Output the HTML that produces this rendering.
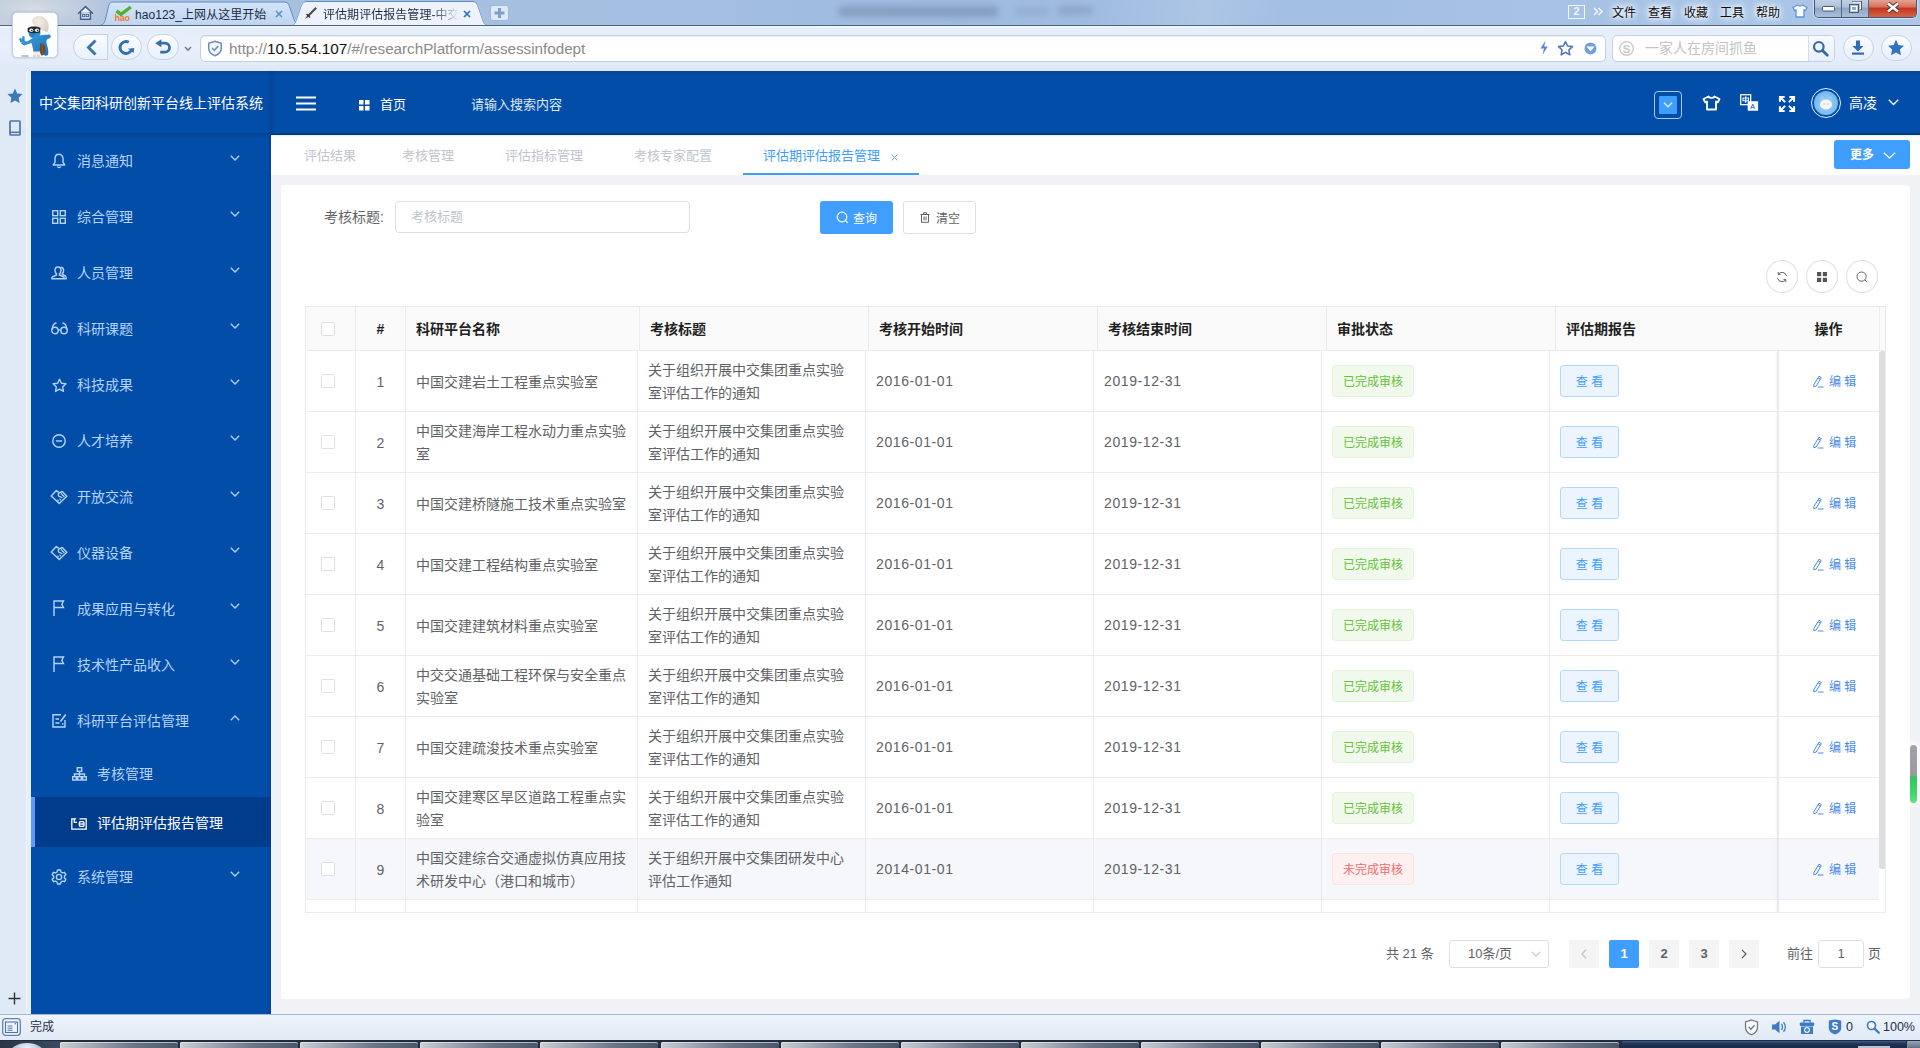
<!DOCTYPE html>
<html lang="zh-CN">
<head>
<meta charset="utf-8">
<title>评估期评估报告管理-中交集团科研创新平台线上评估系统</title>
<style>
*{box-sizing:border-box;margin:0;padding:0}
html,body{width:1920px;height:1048px;overflow:hidden;background:#f0f2f5}
body{position:relative;font-family:"Liberation Sans","Noto Sans CJK SC",sans-serif;font-size:14px;color:#606266}
.abs,.abs-all>*{position:absolute}
svg{display:block;overflow:visible}
i{font-style:normal}
/* ---------- browser chrome ---------- */
#titlebar{left:0;top:0;width:1920px;height:26px;background:linear-gradient(90deg,#c3cfdf 0%,#b4c6de 5%,#a8c1e0 12%,#a4bfe0 30%,#9ebbe0 50%,#a3bfe3 70%,#abc6e8 100%);overflow:hidden}
#toolbar{left:0;top:25px;width:1920px;height:46px;background:linear-gradient(180deg,#e4edf9 0%,#e9f0fb 45%,#e3ecf9 80%,#dde7f5 100%);border-top:1px solid #4f6180}
#leftbar{left:0;top:71px;width:31px;height:943px;background:#e0e9f6}
#leftbar .st{position:absolute;right:0;top:0;width:5px;height:100%;background:#e6eefa;border-left:1px solid #edf3fb}
#status{left:0;top:1014px;width:1920px;height:26px;background:linear-gradient(180deg,#eff4fb,#e0e9f5);border-top:1px solid #a4b9d4;font-size:12px;color:#1f3a5f}
#taskbar{left:0;top:1040px;width:1920px;height:8px;background:#3d4c63;overflow:hidden}
.t12{font-size:12px;line-height:14px;white-space:nowrap}
/* ---------- app ---------- */
#side{left:31px;top:71px;width:240px;height:943px;background:#024da7;overflow:hidden}
#head{left:271px;top:71px;width:1649px;height:64px;background:#024da7;color:#fff}
#tabs{left:271px;top:135px;width:1649px;height:40px;background:#fff;font-size:13px;color:#c0c4cc}
#card{left:281px;top:185px;width:1629px;height:814px;background:#fff;border-radius:4px}
.mi{position:absolute;left:0;width:240px;height:56px;color:#b5d3fb;font-size:14px;line-height:56px;white-space:nowrap}
.mi svg{position:absolute}
.mi .tx{position:absolute;left:46px;top:0}
.mi.sub{height:50px;line-height:50px}
.mi.sub .tx{left:66px}
.mi .ar{left:199px;top:21.500px}
</style>
</head>
<body>
<!-- ================= browser chrome ================= -->
<div id="titlebar" class="abs">
  <div class="abs" style="left:-20px;top:-12px;width:120px;height:40px;background:radial-gradient(ellipse at 45% 50%,rgba(214,220,226,.95) 0%,rgba(196,208,222,.7) 45%,rgba(170,192,221,0) 75%)"></div>
  <div class="abs" style="left:838px;top:6px;width:160px;height:11px;background:#5f7591;opacity:.4;filter:blur(3px);border-radius:4px"></div>
  <div class="abs" style="left:1016px;top:7px;width:32px;height:8px;background:#6f86a6;opacity:.25;filter:blur(3px)"></div>
  <div class="abs" style="left:1058px;top:6px;width:34px;height:9px;background:#5f7591;opacity:.3;filter:blur(3px)"></div>
  <div class="abs" style="left:1100px;top:0;width:260px;height:26px;background:linear-gradient(100deg,rgba(255,255,255,0) 0%,rgba(255,255,255,.13) 40%,rgba(255,255,255,0) 70%)"></div>
</div>
<!-- home icon -->
<svg class="abs" style="left:77px;top:5px" width="17" height="16" viewBox="0 0 17 16"><path d="M1.5 8.2 L8.5 1.6 L15.5 8.2 M3.6 7 V14.3 H13.4 V7" fill="#f4f8fd" stroke="#3c5f95" stroke-width="1.5" stroke-linejoin="round" stroke-linecap="round"/><rect x="5.6" y="9.3" width="2.2" height="2.4" fill="none" stroke="#3c5f95" stroke-width="1"/><rect x="9.2" y="9.3" width="2.2" height="2.4" fill="none" stroke="#3c5f95" stroke-width="1"/></svg>
<!-- tabs -->
<svg class="abs" style="left:98px;top:0" width="420" height="27" viewBox="0 0 420 27"><defs><linearGradient id="tabg" x1="0" y1="0" x2="0" y2="1"><stop offset="0" stop-color="#d4e4f8"/><stop offset="1" stop-color="#bfd5f1"/></linearGradient></defs>
  <path d="M1.500 25.500 C5.500 25 6.500 22.500 7.500 19 L10.500 6.500 C11.300 3.200 12.500 2 15.500 2 H186 C189 2 190.5 3.2 191.5 6.5 L195.5 18 C197 22 198 25 202.5 25.5 Z" fill="url(#tabg)" stroke="#5f8bc9" stroke-width="1"/>
  <path d="M0 26 H192.5 C197 25.5 198 22 199.5 18 L203.500 6.5 C204.5 3.2 206 1.500 209 1.500 H374 C377 1.500 378.5 3.2 379.5 6.500 L383.500 18 C385 22 386 25.500 390.500 26 H420" fill="none" stroke="#5f8bc9" stroke-width="1"/>
  <path d="M192.500 26.500 C197 25.500 198 22 199.500 18 L203.500 6.500 C204.500 3.200 206 2 209 2 H374 C377 2 378.500 3.200 379.500 6.500 L383.500 18 C385 22 386 25.500 390.500 26.500 Z" fill="#eef3fb"/>
  <rect x="392.500" y="5.500" width="18" height="15" rx="2.500" fill="#dfe9f6" stroke="#9fb8da"/>
  <path d="M401.500 8 V18 M396.500 13 H406.500" stroke="#7f9fcb" stroke-width="3"/>
</svg>
<!-- hao icon -->
<svg class="abs" style="left:114px;top:4px" width="19" height="18" viewBox="0 0 19 18"><path d="M2.500 6.800 L7 10.300 L16.800 3" fill="none" stroke="#55b02e" stroke-width="3.400"/><text x="0.500" y="16.500" font-family="Liberation Sans,sans-serif" font-size="9" font-weight="bold" fill="#ef7a28" letter-spacing="-0.300">hao</text></svg>
<div class="abs t12" style="left:135px;top:8px;color:#1a2a44;font-size:12px;letter-spacing:.05px">hao123_上网从这里开始</div>
<svg class="abs" style="left:275px;top:10px" width="8" height="8" viewBox="0 0 8 8"><path d="M1 1 L7 7 M7 1 L1 7" stroke="#5a8fd0" stroke-width="1.600"/></svg>
<!-- active tab -->
<svg class="abs" style="left:304px;top:6px" width="14" height="14" viewBox="0 0 14 14"><path d="M1 13 L3.500 9 L11.500 1 L13 2.500 L5 10.500 Z" fill="#4d4d4d"/><path d="M2.500 8 L6 11.500" stroke="#333" stroke-width="1.400"/></svg>
<div class="abs t12" style="left:323px;top:8px;color:#1a2a44;font-size:12px;letter-spacing:.05px;width:136px;overflow:hidden;-webkit-mask-image:linear-gradient(90deg,#000 80%,transparent 100%);mask-image:linear-gradient(90deg,#000 80%,transparent 100%)">评估期评估报告管理-中交集团科研创新平台线上评估系统</div>
<svg class="abs" style="left:463px;top:10px" width="8" height="8" viewBox="0 0 8 8"><path d="M1 1 L7 7 M7 1 L1 7" stroke="#2f6fc0" stroke-width="1.700"/></svg>
<!-- right title menu -->
<div class="abs" style="left:1568px;top:5px;width:17px;height:14px;border:1.500px solid #f2f7fd;color:#f2f7fd;font-size:11px;font-weight:bold;line-height:11px;text-align:center">2</div>
<svg class="abs" style="left:1593px;top:7px" width="10" height="9" viewBox="0 0 10 9"><path d="M1 1 L4.500 4.500 L1 8 M5.500 1 L9 4.500 L5.500 8" fill="none" stroke="#f2f7fd" stroke-width="1.600"/></svg>
<div class="abs t12 tm" style="left:1612px;top:4px">文件</div>
<div class="abs t12 tm" style="left:1648px;top:4px">查看</div>
<div class="abs t12 tm" style="left:1684px;top:4px">收藏</div>
<div class="abs t12 tm" style="left:1720px;top:4px">工具</div>
<div class="abs t12 tm" style="left:1756px;top:4px">帮助</div>
<svg class="abs" style="left:1792px;top:4px" width="16" height="14" viewBox="0 0 16 14"><path d="M5.500 1 C6.500 2.500 9.500 2.500 10.500 1 L15 3.500 L13.500 6.500 L12 5.800 V13 H4 V5.800 L2.500 6.500 L1 3.500 Z" fill="#f8fbff" stroke="#5f92d8" stroke-width="1.300" stroke-linejoin="round"/></svg>
<!-- window buttons -->
<div class="abs" style="left:1814px;top:-1px;width:103px;height:19px;border:1px solid #46566e;border-top:none;border-radius:0 0 5px 5px;overflow:hidden;box-shadow:0 0 0 1px rgba(255,255,255,.45)">
  <div class="abs" style="left:0;top:0;width:27px;height:18px;background:linear-gradient(180deg,#c3d3e8 0%,#aebfd8 45%,#8ea5c6 50%,#a9c0dd 100%);border-right:1px solid #56677f"></div>
  <div class="abs" style="left:27px;top:0;width:27px;height:18px;background:linear-gradient(180deg,#c3d3e8 0%,#aebfd8 45%,#8ea5c6 50%,#a9c0dd 100%);border-right:1px solid #56677f"></div>
  <div class="abs" style="left:54px;top:0;width:48px;height:18px;background:linear-gradient(180deg,#e7a99c 0%,#d6705c 45%,#c3351b 50%,#d4644a 100%)"></div>
  <svg class="abs" style="left:7px;top:7px" width="13" height="6" viewBox="0 0 13 6"><rect x=".5" y=".5" width="12" height="4.500" rx="1" fill="#fff" stroke="#4c5a70"/></svg>
  <svg class="abs" style="left:34px;top:2px" width="13" height="12" viewBox="0 0 13 12"><rect x="3.500" y=".5" width="9" height="8" fill="none" stroke="#4c5a70" stroke-width="1"/><rect x="3.500" y=".5" width="9" height="8" fill="none" stroke="#fff" stroke-width="1" transform="translate(0.700,0.700) scale(.86)"/><rect x=".5" y="3.500" width="9" height="8" fill="#b4c5dc" stroke="#4c5a70"/><rect x="2.500" y="5.500" width="5" height="4" fill="#93a9c8" stroke="#fff"/></svg>
  <svg class="abs" style="left:71px;top:3px" width="14" height="11" viewBox="0 0 14 11"><path d="M2 1.500 L12 9.500 M12 1.500 L2 9.500" stroke="#4b3030" stroke-width="4.200"/><path d="M2 1.500 L12 9.500 M12 1.500 L2 9.500" stroke="#fff" stroke-width="2.600"/></svg>
</div>
<style>.tm{margin-top:1.500px;color:#0b0b0b;text-shadow:0 0 4px #fff,0 0 6px #eef4fc,0 0 9px #eef4fc,0 0 12px #e8f0fa}</style>

<div id="toolbar" class="abs"></div>
<div class="abs" style="left:0;top:26px;width:1920px;height:3px;background:linear-gradient(180deg,#f4f8fd,#e4edf9)"></div>
<!-- avatar -->
<div class="abs" style="left:12px;top:12px;width:46px;height:46px;border-radius:5px;background:#fdfdfe;border:1px solid #c8d4e4;box-shadow:0 0 2px rgba(60,80,110,.35);overflow:hidden">
  <svg width="44" height="44" viewBox="0 0 44 44">
    <defs><radialGradient id="hatg" cx="40%" cy="35%" r="70%"><stop offset="0" stop-color="#f4efe6"/><stop offset="1" stop-color="#d8d0c2"/></radialGradient>
    <linearGradient id="bodg" x1="0" y1="0" x2="1" y2="1"><stop offset="0" stop-color="#3aa0dc"/><stop offset="1" stop-color="#1d6fb3"/></linearGradient></defs>
    <path d="M19 8 C20 2.500 29 1 33 6 C36 9.500 36.500 15 34.500 19 C32 18 28 17.500 24.500 14.500 C22 13 19.500 11.500 19 8 Z" fill="url(#hatg)"/>
    <ellipse cx="21.500" cy="20" rx="6" ry="5.500" fill="#2f92d4"/>
    <path d="M14.500 15.500 C17 13 23 13 27.500 15 L27 19.500 C23 20.500 18 20.500 14.800 19 Z" fill="#20262e"/>
    <ellipse cx="18.300" cy="17.300" rx="2" ry="1.700" fill="#eef1f4"/><ellipse cx="24" cy="17.300" rx="2.100" ry="1.800" fill="#eef1f4"/>
    <circle cx="18.800" cy="17.500" r=".8" fill="#222"/><circle cx="24.600" cy="17.500" r=".8" fill="#222"/>
    <ellipse cx="19.500" cy="21.500" rx="2.300" ry="1.700" fill="#1f7fc6"/>
    <path d="M20 25 C24 22 31 22 36.500 21.500 C38.500 22.500 38 25 36 25.500 C34 26 33 27 33.500 30 C34.500 34 36 38 35 42 L32 43 C31 41 30 40 28 40 L20.500 39 C20 35 19 32 18.500 30 L11 32.500 L8 30.500 L10 27.500 L14 28.500 Z" fill="url(#bodg)"/>
    <path d="M7.500 29.500 L6 26 L8 24.500 L9 27 L9.500 23 L11.500 23.300 L11.800 28.500 Z" fill="#2f92d4"/>
    <path d="M27.500 30.500 C30.500 30 32.500 33 32.300 37 C32 41 30 43 28.500 42.500 C26.500 41 26.500 33 27.500 30.500 Z" fill="#8b3a24"/>
    <path d="M29 31 L30 42" stroke="#3c7a4a" stroke-width="1"/>
    <path d="M20.500 38.500 H27 V42 H20.500 Z" fill="#efece6"/>
    <path d="M20 42 H23.300 V44 H19.500 Z M24 42 H27 L27.500 44 H24 Z" fill="#e3d6c4"/>
    <path d="M8.500 43 H15.500" stroke="#4a5d7a" stroke-width=".9" opacity=".8"/>
  </svg>
</div>
<!-- nav buttons -->
<div class="abs" style="left:73px;top:34px;width:35px;height:26px;border:1px solid #c5d0e0;border-radius:13px 0 0 13px;background:linear-gradient(180deg,#fafcff,#e9f0fa)"></div>
<svg class="abs" style="left:85.500px;top:39px" width="12" height="17" viewBox="0 0 12 17"><path d="M9.500 1.500 L2.500 8.500 L9.500 15.500" fill="none" stroke="#3c72b0" stroke-width="2.900" stroke-linejoin="miter"/></svg>
<div class="abs" style="left:111px;top:34px;width:31px;height:26px;border:1px solid #c5d3e6;border-radius:13px;background:linear-gradient(180deg,#fafcff,#e9f0fa)"></div>
<svg class="abs" style="left:117px;top:39px" width="18" height="17" viewBox="0 0 18 17"><path d="M11.800 3.200 A6 6 0 1 0 14.400 11.200" fill="none" stroke="#356fab" stroke-width="2.900"/><path d="M11 9.700 L17.200 8.900 L16.700 14 Z" fill="#356fab"/></svg>
<div class="abs" style="left:147px;top:34px;width:32px;height:26px;border:1px solid #c5d3e6;border-radius:13px;background:linear-gradient(180deg,#fafcff,#e9f0fa)"></div>
<svg class="abs" style="left:154px;top:39px" width="18" height="17" viewBox="0 0 18 17"><path d="M6.500 4.200 H11 A4.500 4.500 0 0 1 11 13.200 H6.200" fill="none" stroke="#356fab" stroke-width="2.800"/><path d="M1.200 4.200 L7.400 .2 V8.200 Z" fill="#356fab"/></svg>
<svg class="abs" style="left:184px;top:45.500px" width="8" height="6" viewBox="0 0 8 6"><path d="M1 1 L4 4.200 L7 1" fill="none" stroke="#5f7396" stroke-width="1.300"/></svg>
<!-- address bar -->
<div class="abs" style="left:200px;top:35px;width:1406px;height:27px;border:1px solid #c3d1e5;border-radius:5px;background:#fff;box-shadow:inset 0 1px 1px rgba(160,180,210,.25)"></div>
<svg class="abs" style="left:207px;top:40px" width="16" height="17" viewBox="0 0 16 17"><path d="M8 1.200 L14.300 3.200 V8 C14.300 11.800 11.500 14.500 8 15.800 C4.500 14.500 1.700 11.800 1.700 8 V3.200 Z" fill="#f4f7fb" stroke="#6c8db8" stroke-width="1.500"/><path d="M5 8 L7.300 10.300 L11.300 6" fill="none" stroke="#6c8db8" stroke-width="1.500"/></svg>
<div class="abs" style="left:229px;top:40px;font-size:15.300px;line-height:18px;color:#8a8a8a;white-space:nowrap;letter-spacing:-.05px">http://<span style="color:#111">10.5.54.107</span>/#/researchPlatform/assessinfodept</div>
<svg class="abs" style="left:1539px;top:40px" width="10" height="16" viewBox="0 0 10 16"><path d="M6.500 .5 L1.500 8.500 H5 L3.500 15 L8.800 6.500 H5.200 Z" fill="#5d87c0"/></svg>
<svg class="abs" style="left:1557px;top:40px" width="17" height="16" viewBox="0 0 17 16"><path d="M8.500 1.500 L10.600 6 L15.500 6.600 L11.900 10 L12.800 14.800 L8.500 12.400 L4.200 14.800 L5.100 10 L1.500 6.600 L6.400 6 Z" fill="none" stroke="#4d7bb8" stroke-width="1.600" stroke-linejoin="round"/></svg>
<svg class="abs" style="left:1584px;top:42px" width="13" height="13" viewBox="0 0 13 13"><circle cx="6.500" cy="6.500" r="6" fill="#6ea0dd"/><path d="M2.500 4.500 H10.500 L6.500 9.500 Z" fill="#fff"/></svg>
<!-- search box -->
<div class="abs" style="left:1612px;top:35px;width:223px;height:27px;border:1px solid #c3d1e5;border-radius:5px;background:#fff"></div>
<div class="abs" style="left:1808px;top:36px;width:26px;height:25px;border-left:1px solid #d3deee;background:linear-gradient(180deg,#f8fbff,#e8eff9);border-radius:0 4px 4px 0"></div>
<svg class="abs" style="left:1619px;top:41px" width="15" height="15" viewBox="0 0 15 15"><circle cx="7.500" cy="7.500" r="6.800" fill="none" stroke="#c9c9c9" stroke-width="1.300"/><text x="3.800" y="11.700" font-family="Liberation Sans,sans-serif" font-weight="bold" font-size="11.500" fill="#c9c9c9">S</text></svg>
<div class="abs" style="left:1645px;top:40px;font-size:14px;line-height:17px;color:#c4c4c4;white-space:nowrap">一家人在房间抓鱼</div>
<svg class="abs" style="left:1812px;top:40px" width="17" height="17" viewBox="0 0 17 17"><circle cx="6.800" cy="6.800" r="4.800" fill="none" stroke="#3568a8" stroke-width="2.200"/><path d="M10.500 10.500 L15.300 15.300" stroke="#3568a8" stroke-width="2.800" stroke-linecap="round"/></svg>
<div class="abs" style="left:1843px;top:35px;width:31px;height:26px;border:1px solid #c5d3e6;border-radius:13px;background:linear-gradient(180deg,#fafcff,#e9f0fa)"></div>
<svg class="abs" style="left:1851px;top:40px" width="14" height="15" viewBox="0 0 14 15"><path d="M5 .5 H9 V6 H12.500 L7 11.500 L1.500 6 H5 Z" fill="#2f6cb3"/><rect x="1" y="12.500" width="12" height="2.200" fill="#2f6cb3"/></svg>
<div class="abs" style="left:1881px;top:35px;width:31px;height:26px;border:1px solid #c5d3e6;border-radius:13px;background:linear-gradient(180deg,#fafcff,#e9f0fa)"></div>
<svg class="abs" style="left:1887px;top:39px" width="18" height="17" viewBox="0 0 18 17"><path d="M9 .8 L11.400 6 L17 6.700 L12.900 10.600 L13.900 16.200 L9 13.500 L4.100 16.200 L5.100 10.600 L1 6.700 L6.600 6 Z" fill="#2f74c0"/></svg>

<!-- left vertical bar -->
<div id="leftbar" class="abs"><div class="st"></div>
  <svg class="abs" style="left:7px;top:17px" width="16" height="16" viewBox="0 0 16 16"><path d="M8 .5 L10.200 5.400 L15.500 6 L11.600 9.700 L12.600 15 L8 12.400 L3.400 15 L4.400 9.700 L.5 6 L5.800 5.400 Z" fill="#3d77b8"/></svg>
  <svg class="abs" style="left:9px;top:49px" width="12" height="16" viewBox="0 0 12 16"><rect x="1" y="1" width="10" height="14" rx=".8" fill="none" stroke="#4a76ac" stroke-width="1.700"/><path d="M1 12.300 H11" stroke="#4a76ac" stroke-width="1.500"/></svg>
  <svg class="abs" style="left:8px;top:921px" width="13" height="13" viewBox="0 0 13 13"><path d="M6.500 .5 V12.500 M.5 6.500 H12.500" stroke="#333" stroke-width="1.400"/></svg>
</div>

<!-- status bar -->
<div id="status" class="abs">
  <svg class="abs" style="left:2px;top:3px" width="19" height="18" viewBox="0 0 19 18"><rect x=".7" y=".7" width="17.600" height="16.600" rx="3" fill="#f1f6fc" stroke="#5d82b4" stroke-width="1.300"/><rect x="3.500" y="4" width="12" height="10.500" fill="none" stroke="#4a73aa" stroke-width="1.100"/><path d="M5.500 8 H10.500 M5.500 10.200 H10.500 M5.500 12.300 H10.500" stroke="#4a73aa" stroke-width="1"/><circle cx="13.300" cy="5.800" r=".8" fill="#4a73aa"/></svg>
  <div class="abs t12" style="left:30px;top:5px;color:#1b2f4d">完成</div>
  <svg class="abs" style="left:1744px;top:4px" width="15" height="17" viewBox="0 0 15 17"><path d="M7.500 1 L13.500 3 V8 C13.500 11.800 10.800 14.500 7.500 15.800 C4.200 14.500 1.500 11.800 1.500 8 V3 Z" fill="#f6f8fb" stroke="#6b7480" stroke-width="1.200"/><path d="M4.700 8 L6.900 10.200 L10.500 6.300" fill="none" stroke="#6b7480" stroke-width="1.300"/></svg>
  <svg class="abs" style="left:1771px;top:5px" width="16" height="14" viewBox="0 0 16 14"><path d="M1 4.500 H4 L8.500 .8 V13.200 L4 9.500 H1 Z" fill="#3d7cc4"/><path d="M10.500 4 C11.800 5.500 11.800 8.500 10.500 10 M12.500 2.200 C15 4.800 15 9.200 12.500 11.800" fill="none" stroke="#3d7cc4" stroke-width="1.300"/></svg>
  <svg class="abs" style="left:1799px;top:4px" width="16" height="16" viewBox="0 0 16 16"><path d="M5 3.500 V1.500 H11 V3.500" fill="none" stroke="#3d7cc4" stroke-width="1.500"/><rect x=".8" y="3.500" width="14.400" height="3.500" rx="1" fill="#3d7cc4"/><path d="M2 7.500 H14 V15 H2 Z" fill="#3d7cc4"/><circle cx="8" cy="11" r="3" fill="#e9f0f9"/><path d="M8 9 V13 M6 11 H10" stroke="#3d7cc4" stroke-width="1.300"/></svg>
  <svg class="abs" style="left:1828px;top:4px" width="14" height="16" viewBox="0 0 14 16"><path d="M.8 1.500 L7 .5 L13.200 1.500 V9 C13.200 12.500 10 14.500 7 15.500 C4 14.500 .8 12.500 .8 9 Z" fill="#3d7cc4"/><text x="3.600" y="11.300" font-family="Liberation Sans,sans-serif" font-size="10" font-weight="bold" fill="#fff">S</text></svg>
  <div class="abs t12" style="left:1846px;top:5px;color:#1b2f4d;font-size:12.500px">0</div>
  <svg class="abs" style="left:1866px;top:5px" width="14" height="14" viewBox="0 0 14 14"><circle cx="5.500" cy="5.500" r="4" fill="#f4f8fc" stroke="#3d7cc4" stroke-width="1.700"/><path d="M8.600 8.600 L12.800 12.800" stroke="#3d7cc4" stroke-width="2.300" stroke-linecap="round"/></svg>
  <div class="abs t12" style="left:1883px;top:5px;color:#1b2f4d;font-size:12.500px">100%</div>
</div>
<!-- taskbar sliver -->
<style>.tk{top:2px;width:118px;height:6px;border-radius:2px 2px 0 0;background:linear-gradient(90deg,#c9cdd3 0%,#a4abb6 25%,#6d788a 60%,#4a566a 100%);box-shadow:inset 0 1px 0 rgba(255,255,255,.55),inset 1px 0 0 rgba(255,255,255,.4)}</style>
<div id="taskbar" class="abs">
  <div class="abs" style="left:0;top:0;width:1920px;height:8px;background:#232c3a"></div>
  <div class="abs" style="left:0;top:1px;width:60px;height:7px;background:linear-gradient(90deg,#2a3445,#3b4a61)"></div>
  <div class="abs" style="left:10px;top:3px;width:34px;height:20px;border-radius:50%;background:radial-gradient(ellipse at 50% 30%,#f3f6fa 0%,#b9c7da 50%,#5d7392 100%)"></div>
  <div class="abs tk" style="left:60.0px"></div>
  <div class="abs tk" style="left:180.1px"></div>
  <div class="abs tk" style="left:300.2px"></div>
  <div class="abs tk" style="left:420.3px"></div>
  <div class="abs tk" style="left:540.4px"></div>
  <div class="abs tk" style="left:660.5px"></div>
  <div class="abs tk" style="left:780.6px"></div>
  <div class="abs tk" style="left:900.7px"></div>
  <div class="abs tk" style="left:1020.8px"></div>
  <div class="abs tk" style="left:1140.9px"></div>
  <div class="abs tk" style="left:1261.0px"></div>
  <div class="abs tk" style="left:1381.1px"></div>
  <div class="abs tk" style="left:1501.2px"></div>
  <div class="abs" style="left:1622px;top:1px;width:284px;height:7px;background:linear-gradient(180deg,#3a5a8c 0%,#1d3458 40%,#162b4b 100%)"></div>
  <div class="abs" style="left:1907px;top:1px;width:13px;height:7px;background:linear-gradient(180deg,#9aa7b8,#5f6d82);border-left:1px solid #8794a6"></div>
  <div class="abs" style="left:1858px;top:6px;width:32px;height:2px;background:#dfe6ef;opacity:.8"></div>
</div>
<!-- ================= sidebar ================= -->
<div id="side" class="abs">
  <div class="abs" style="left:8px;top:22px;width:230px;line-height:20px;font-size:14px;color:#fff;white-space:nowrap;letter-spacing:0">中交集团科研创新平台线上评估系统</div>
  <div class="abs" style="left:0;top:62px;width:240px;height:6px;background:linear-gradient(180deg,rgba(0,30,80,.22),rgba(0,30,80,0))"></div>
  <div class="abs" style="right:0;top:0;width:4px;height:943px;background:linear-gradient(90deg,rgba(0,30,90,0),rgba(0,30,90,.18))"></div>

  <div class="mi" style="top:62px">
    <svg style="left:21px;top:20px" width="14" height="16" viewBox="0 0 14 16" fill="none" stroke="#b5d3fb" stroke-width="1.400" stroke-linejoin="round"><path d="M7 1.300 C4.200 1.300 3 3.600 3 6 V9.300 L1.200 12 H12.800 L11 9.300 V6 C11 3.600 9.800 1.300 7 1.300 Z"/><path d="M5.300 13.600 C5.800 14.900 8.200 14.900 8.700 13.600"/></svg>
    <span class="tx">消息通知</span>
    <svg class="ar" width="10" height="6" viewBox="0 0 10 6"><path d="M.8 .8 L5 5 L9.200 .8" fill="none" stroke="#b5d3fb" stroke-width="1.300"/></svg>
  </div>
  <div class="mi" style="top:118px">
    <svg style="left:21px;top:21px" width="14" height="14" viewBox="0 0 14 14" fill="none" stroke="#b5d3fb" stroke-width="1.400"><rect x=".7" y=".7" width="5" height="5"/><rect x="8.300" y=".7" width="5" height="5"/><rect x=".7" y="8.300" width="5" height="5"/><rect x="8.300" y="8.300" width="5" height="5"/></svg>
    <span class="tx">综合管理</span>
    <svg class="ar" width="10" height="6" viewBox="0 0 10 6"><path d="M.8 .8 L5 5 L9.200 .8" fill="none" stroke="#b5d3fb" stroke-width="1.300"/></svg>
  </div>
  <div class="mi" style="top:174px">
    <svg style="left:20px;top:21px" width="16" height="14" viewBox="0 0 16 14" fill="none" stroke="#b5d3fb" stroke-width="1.400" stroke-linejoin="round"><path d="M7 1 C4.800 1 4 2.600 4 4.300 C4 6 4.600 7.200 5.500 7.800 V9 L1.500 10.800 C.9 11.100 .8 11.800 .8 12.800 H13.200 C13.200 11.800 13.100 11.100 12.500 10.800 L8.500 9 V7.800 C9.400 7.200 10 6 10 4.300 C10 2.600 9.200 1 7 1 Z"/><path d="M10 1.300 C11.800 1.500 12.600 2.800 12.600 4.500 C12.600 6 12 7 11.300 7.600 V8.500 L14.500 10 C15 10.300 15.200 11 15.200 12.800 H13.400"/></svg>
    <span class="tx">人员管理</span>
    <svg class="ar" width="10" height="6" viewBox="0 0 10 6"><path d="M.8 .8 L5 5 L9.200 .8" fill="none" stroke="#b5d3fb" stroke-width="1.300"/></svg>
  </div>
  <div class="mi" style="top:230px">
    <svg style="left:20px;top:21px" width="17" height="13" viewBox="0 0 17 13" fill="none" stroke="#b5d3fb" stroke-width="1.400"><circle cx="4" cy="8.500" r="3.200"/><circle cx="13" cy="8.500" r="3.200"/><path d="M7.200 8.500 C7.800 7.600 9.200 7.600 9.800 8.500"/><path d="M1 7.500 C1.500 3.500 3 1.200 5.500 1 M16 7.500 C15.500 3.500 14 1.200 11.500 1"/></svg>
    <span class="tx">科研课题</span>
    <svg class="ar" width="10" height="6" viewBox="0 0 10 6"><path d="M.8 .8 L5 5 L9.200 .8" fill="none" stroke="#b5d3fb" stroke-width="1.300"/></svg>
  </div>
  <div class="mi" style="top:286px">
    <svg style="left:21px;top:21px" width="15" height="15" viewBox="0 0 15 15" fill="none" stroke="#b5d3fb" stroke-width="1.400" stroke-linejoin="round"><path d="M7.500 1.200 L9.400 5.300 L13.900 5.800 L10.600 8.900 L11.500 13.400 L7.500 11.200 L3.500 13.400 L4.400 8.900 L1.100 5.800 L5.600 5.300 Z"/></svg>
    <span class="tx">科技成果</span>
    <svg class="ar" width="10" height="6" viewBox="0 0 10 6"><path d="M.8 .8 L5 5 L9.200 .8" fill="none" stroke="#b5d3fb" stroke-width="1.300"/></svg>
  </div>
  <div class="mi" style="top:342px">
    <svg style="left:21px;top:21px" width="14" height="14" viewBox="0 0 14 14" fill="none" stroke="#b5d3fb" stroke-width="1.400"><circle cx="7" cy="7" r="6.200"/><path d="M3.800 7 H10.200"/></svg>
    <span class="tx">人才培养</span>
    <svg class="ar" width="10" height="6" viewBox="0 0 10 6"><path d="M.8 .8 L5 5 L9.200 .8" fill="none" stroke="#b5d3fb" stroke-width="1.300"/></svg>
  </div>
  <div class="mi" style="top:398px">
    <svg style="left:19px;top:20px" width="18" height="16" viewBox="0 0 18 16" fill="none" stroke="#b5d3fb" stroke-width="1.400" stroke-linejoin="round" stroke-linecap="round"><path d="M1.200 7 L6.300 1.600 L9.300 3.800 L12.300 2.400 L16.800 7.200 L9.300 14.600 Z"/><path d="M9.300 3.800 C7.800 5.200 8 6.600 9.200 7.400 C10.300 8 11.200 7.600 12 8.600" stroke-width="1.300"/><path d="M11.300 4.800 L14 7.500" stroke-width="1.300"/><path d="M7.800 11.300 L8.200 11.700 M10 10.300 L10.400 10.700" stroke-width="1.300"/></svg>
    <span class="tx">开放交流</span>
    <svg class="ar" width="10" height="6" viewBox="0 0 10 6"><path d="M.8 .8 L5 5 L9.200 .8" fill="none" stroke="#b5d3fb" stroke-width="1.300"/></svg>
  </div>
  <div class="mi" style="top:454px">
    <svg style="left:19px;top:20px" width="18" height="16" viewBox="0 0 18 16" fill="none" stroke="#b5d3fb" stroke-width="1.400" stroke-linejoin="round" stroke-linecap="round"><path d="M1.200 7 L6.300 1.600 L9.300 3.800 L12.300 2.400 L16.800 7.200 L9.300 14.600 Z"/><path d="M9.300 3.800 C7.800 5.200 8 6.600 9.200 7.400 C10.300 8 11.200 7.600 12 8.600" stroke-width="1.300"/><path d="M11.300 4.800 L14 7.500" stroke-width="1.300"/><path d="M7.800 11.300 L8.200 11.700 M10 10.300 L10.400 10.700" stroke-width="1.300"/></svg>
    <span class="tx">仪器设备</span>
    <svg class="ar" width="10" height="6" viewBox="0 0 10 6"><path d="M.8 .8 L5 5 L9.200 .8" fill="none" stroke="#b5d3fb" stroke-width="1.300"/></svg>
  </div>
  <div class="mi" style="top:510px">
    <svg style="left:22px;top:19px" width="12" height="17" viewBox="0 0 12 17" fill="none" stroke="#b5d3fb" stroke-width="1.400"><path d="M1 16 V1 H10.500 L8.800 4.200 L10.500 7.500 H1"/></svg>
    <span class="tx">成果应用与转化</span>
    <svg class="ar" width="10" height="6" viewBox="0 0 10 6"><path d="M.8 .8 L5 5 L9.200 .8" fill="none" stroke="#b5d3fb" stroke-width="1.300"/></svg>
  </div>
  <div class="mi" style="top:566px">
    <svg style="left:22px;top:19px" width="12" height="17" viewBox="0 0 12 17" fill="none" stroke="#b5d3fb" stroke-width="1.400"><path d="M1 16 V1 H10.500 L8.800 4.200 L10.500 7.500 H1"/></svg>
    <span class="tx">技术性产品收入</span>
    <svg class="ar" width="10" height="6" viewBox="0 0 10 6"><path d="M.8 .8 L5 5 L9.200 .8" fill="none" stroke="#b5d3fb" stroke-width="1.300"/></svg>
  </div>
  <div class="mi" style="top:622px">
    <svg style="left:21px;top:20px" width="15" height="15" viewBox="0 0 15 15" fill="none" stroke="#b5d3fb" stroke-width="1.400"><path d="M9 1.800 H1 V14 H13 V7"/><path d="M3.500 6 H7 M3.500 10 H7.500" /><path d="M8.500 8.500 L13.800 1.500" stroke-width="1.600"/><path d="M10 11 H11.500" /></svg>
    <span class="tx">科研平台评估管理</span>
    <svg class="ar" width="10" height="6" viewBox="0 0 10 6"><path d="M.8 5.200 L5 1 L9.200 5.200" fill="none" stroke="#b5d3fb" stroke-width="1.300"/></svg>
  </div>
  <div class="mi sub" style="top:678px">
    <svg style="left:41px;top:18px" width="15" height="14" viewBox="0 0 15 14" fill="none" stroke="#b5d3fb" stroke-width="1.400"><rect x="5.300" y=".7" width="4.400" height="3.600"/><path d="M7.500 4.300 V7 M2.500 9.500 V7 H12.500 V9.500 M7.500 7 V9.500"/><rect x=".7" y="9.700" width="3.600" height="3.300"/><rect x="5.700" y="9.700" width="3.600" height="3.300"/><rect x="10.700" y="9.700" width="3.600" height="3.300"/></svg>
    <span class="tx">考核管理</span>
  </div>
  <div class="mi sub" style="top:726px;height:50px;line-height:53px;background:#013c8c;color:#fff">
    <div class="abs" style="left:0;top:0;width:4px;height:50px;background:#5b9df5"></div>
    <svg style="left:40px;top:21px" width="16" height="12" viewBox="0 0 16 12" fill="none" stroke="#fff" stroke-width="1.300"><path d="M5.200 .8 H.8 V11.200 H15.200 V.8 H8.500"/><path d="M3.300 .8 V4.300 H6"/><rect x="8.300" y="3.600" width="4.700" height="4.800" rx="1.200"/><path d="M8.300 6 H13"/></svg>
    <span class="tx">评估期评估报告管理</span>
  </div>
  <div class="mi" style="top:778px">
    <svg style="left:20px;top:20px" width="16" height="16" viewBox="0 0 16 16" fill="none" stroke="#b5d3fb" stroke-width="1.400" stroke-linejoin="round"><circle cx="8" cy="8" r="2.600"/><path d="M6.600 1 H9.400 L9.900 3 L11.500 3.900 L13.500 3.300 L14.900 5.700 L13.400 7.100 V8.900 L14.900 10.300 L13.500 12.700 L11.500 12.100 L9.900 13 L9.400 15 H6.600 L6.100 13 L4.500 12.100 L2.500 12.700 L1.100 10.300 L2.600 8.900 V7.100 L1.100 5.700 L2.500 3.300 L4.500 3.900 L6.100 3 Z"/></svg>
    <span class="tx">系统管理</span>
    <svg class="ar" width="10" height="6" viewBox="0 0 10 6"><path d="M.8 .8 L5 5 L9.200 .8" fill="none" stroke="#b5d3fb" stroke-width="1.300"/></svg>
  </div>
</div>
<!-- ================= top header ================= -->
<div id="head" class="abs">
  <div class="abs" style="left:-240px;top:0;width:1889px;height:6px;background:linear-gradient(180deg,rgba(20,40,90,.22),rgba(20,40,90,.0))"></div>
  <div class="abs" style="left:0;top:62px;width:1649px;height:2px;background:linear-gradient(180deg,rgba(0,20,70,.15),rgba(0,20,70,.45))"></div>
  <div class="abs" style="left:0;top:0;width:6px;height:64px;background:linear-gradient(90deg,rgba(0,30,90,.16),rgba(0,30,90,0))"></div>
  <svg class="abs" style="left:25px;top:25px" width="20" height="15" viewBox="0 0 20 15"><path d="M0 1.500 H20 M0 7.500 H20 M0 13.500 H20" stroke="#fff" stroke-width="2.200"/></svg>
  <svg class="abs" style="left:87.500px;top:28.500px" width="10.500" height="10.500" viewBox="0 0 10 10" fill="#fff"><rect x="0" y="0" width="4.300" height="4.300"/><rect x="5.700" y="0" width="4.300" height="4.300"/><rect x="0" y="5.700" width="4.300" height="4.300"/><rect x="5.700" y="5.700" width="4.300" height="4.300"/></svg>
  <div class="abs" style="left:109px;top:25px;font-size:13px;line-height:18px;color:#fff;white-space:nowrap">首页</div>
  <div class="abs" style="left:200px;top:25px;font-size:13px;line-height:18px;color:#dfe8f6;white-space:nowrap">请输入搜索内容</div>
  <!-- right tools -->
  <div class="abs" style="left:1383px;top:20px;width:28px;height:28px;border:1px solid #a7cdfb;border-radius:4px"></div>
  <div class="abs" style="left:1388px;top:25px;width:18px;height:18px;background:#409eff;border-radius:1px"></div>
  <svg class="abs" style="left:1392px;top:31px" width="10" height="6" viewBox="0 0 10 6"><path d="M1 .8 L5 4.800 L9 .8" fill="none" stroke="#d9ecff" stroke-width="1.500"/></svg>
  <svg class="abs" style="left:1431px;top:24px" width="19" height="16" viewBox="0 0 19 16"><path d="M6.500 1.500 C7.500 3.300 11.500 3.300 12.500 1.500 L17.500 4 L15.800 7.300 L14 6.500 V14.500 H5 V6.500 L3.200 7.300 L1.500 4 Z" fill="none" stroke="#fff" stroke-width="1.900" stroke-linejoin="round"/></svg>
  <svg class="abs" style="left:1469px;top:23px" width="19" height="17.200" viewBox="0 0 21 19"><rect x=".8" y=".8" width="11" height="11" fill="#024da7" stroke="#fff" stroke-width="1.400"/><path d="M6.300 2.500 V10 M3.300 4.500 H9.300 V7.500 H3.300 Z" fill="none" stroke="#fff" stroke-width="1.200"/><rect x="8.500" y="8" width="11.500" height="10.500" fill="#fff"/><text x="11.300" y="16.500" font-family="Liberation Sans,sans-serif" font-size="8" fill="#024da7">A</text></svg>
  <svg class="abs" style="left:1508px;top:24.500px" width="16" height="16" viewBox="0 0 17 17" fill="none" stroke="#fff" stroke-width="2.200"><path d="M1 6 V1 H6 M1.500 1.500 L6.500 6.500 M11 1 H16 V6 M15.500 1.500 L10.500 6.500 M1 11 V16 H6 M1.500 15.500 L6.500 10.500 M16 11 V16 H11 M15.500 15.500 L10.500 10.500"/></svg>
  <div class="abs" style="left:1540px;top:17px;width:30px;height:30px;border-radius:50%;border:1.500px solid #e3efff;background:#024da7"></div>
  <div class="abs" style="left:1543px;top:20px;width:24px;height:24px;border-radius:50%;background:radial-gradient(circle at 50% 55%,#a9d6f7 0%,#7dbdf0 55%,#5aa5e8 100%)"></div>
  <svg class="abs" style="left:1546px;top:24px" width="18" height="17" viewBox="0 0 18 17"><circle cx="5" cy="3.500" r="2.300" fill="#8ecbf5"/><circle cx="13" cy="3.500" r="2.300" fill="#8ecbf5"/><ellipse cx="9" cy="9.500" rx="6" ry="5" fill="#f3f8fd"/><circle cx="7" cy="9" r=".8" fill="#f2a6a6"/><circle cx="11" cy="9" r=".8" fill="#f2a6a6"/></svg>
  <div class="abs" style="left:1578px;top:22px;font-size:14px;line-height:20px;color:#fff;white-space:nowrap">高凌</div>
  <svg class="abs" style="left:1617px;top:28px" width="11" height="7" viewBox="0 0 11 7"><path d="M.8 .8 L5.500 5.500 L10.200 .8" fill="none" stroke="#fff" stroke-width="1.300"/></svg>
</div>
<!-- ================= tabs ================= -->
<div id="tabs" class="abs">
  <div class="abs tb" style="left:33px">评估结果</div>
  <div class="abs tb" style="left:131px">考核管理</div>
  <div class="abs tb" style="left:234px">评估指标管理</div>
  <div class="abs tb" style="left:363px">考核专家配置</div>
  <div class="abs tb" style="left:492px;color:#409eff">评估期评估报告管理</div>
  <svg class="abs" style="left:620px;top:19px" width="7" height="7" viewBox="0 0 7 7"><path d="M.6 .6 L6.400 6.400 M6.400 .6 L.6 6.400" stroke="#6aa5ee" stroke-width="1"/></svg>
  <div class="abs" style="left:472px;top:38px;width:176px;height:2px;background:#409eff"></div>
  <div class="abs" style="left:1563px;top:5px;width:76px;height:29px;background:#409eff;border-radius:3px"></div>
  <div class="abs" style="left:1579px;top:12px;font-size:12px;line-height:16px;color:#fff;font-weight:bold;white-space:nowrap">更多</div>
  <svg class="abs" style="left:1612px;top:16.500px" width="13" height="7" viewBox="0 0 13 7"><path d="M.8 .8 L6.500 6 L12.200 .8" fill="none" stroke="#fff" stroke-width="1.200"/></svg>
</div>
<div class="abs" style="left:271px;top:135px;width:1649px;height:2px;background:linear-gradient(180deg,rgba(0,40,110,.10),rgba(0,40,110,0))"></div>
<style>
.tb{top:12px;line-height:18px;white-space:nowrap}
#card{font-size:14px}
.hd{position:absolute;top:0;height:43px;border-right:1px solid #e9ebee;font-weight:bold;color:#1f1f1f;font-size:14px;line-height:45px;padding-left:10px;white-space:nowrap}
.rw{position:absolute;left:0;width:1573px;height:61px;border-bottom:1px solid #e9ebee}
.rw>div{position:absolute;top:0;height:60px;border-right:1px solid #e9ebee}
.rw .c{display:flex;align-items:center;padding:2px 10px 0;line-height:23px;color:#606266;font-size:14px;word-break:break-all}
.ck{position:absolute;left:15px;width:14px;height:14px;border:1px solid #dcdfe6;border-radius:1.500px;background:#fff}
.tag{position:absolute;left:10px;top:14px;width:82px;height:32px;border-radius:4px;font-size:12px;line-height:32.500px;text-align:center;white-space:nowrap}
.tg{background:#f0f9eb;border:1px solid #e1f3d8;color:#67c23a}
.tr{background:#fef0f0;border:1px solid #fde2e2;color:#f56c6c}
.vb{position:absolute;left:10px;top:14px;width:59px;height:32px;border-radius:3px;background:#ecf5ff;border:1px solid #b3d8ff;color:#409eff;font-size:12px;line-height:32px;text-align:center;white-space:nowrap}
.ed{position:absolute;left:50px;top:22px;font-size:12px;line-height:18px;color:#4a8bea;white-space:nowrap}
.pg{position:absolute;top:755px;height:28px;line-height:28px;font-size:13px;white-space:nowrap}
.pb{width:30px;border-radius:2px;background:#f4f4f5;text-align:center;font-weight:bold;color:#606266}
.rb{position:absolute;top:75px;width:32px;height:33px;border:1px solid #dcdfe6;border-radius:50%;background:#fff}
</style>
<!-- ================= card ================= -->
<div id="card" class="abs">
  <div class="abs" style="left:43px;top:22px;line-height:20px;font-size:14px;color:#606266;white-space:nowrap">考核标题:</div>
  <div class="abs" style="left:114px;top:16px;width:295px;height:32px;border:1px solid #dcdfe6;border-radius:4px;background:#fff"></div>
  <div class="abs" style="left:130px;top:23px;line-height:18px;font-size:13px;color:#c0c4cc;white-space:nowrap">考核标题</div>
  <div class="abs" style="left:539px;top:16px;width:73px;height:33px;border-radius:3px;background:#409eff"></div>
  <svg class="abs" style="left:555px;top:26px" width="13" height="13" viewBox="0 0 13 13"><circle cx="6" cy="6" r="4.800" fill="none" stroke="#fff" stroke-width="1.200"/><path d="M9.500 9.500 L11.800 11.800" stroke="#fff" stroke-width="1.200"/></svg>
  <div class="abs" style="left:572px;top:25.500px;font-size:12px;line-height:16px;color:#fff;white-space:nowrap">查询</div>
  <div class="abs" style="left:622px;top:16px;width:73px;height:33px;border-radius:3px;background:#fff;border:1px solid #dcdfe6"></div>
  <svg class="abs" style="left:639px;top:27px" width="10" height="11" viewBox="0 0 10 11" fill="none" stroke="#606266" stroke-width="1"><path d="M.5 2.500 H9.500 M3.500 2.500 V.8 H6.500 V2.500 M1.500 2.500 V10.300 H8.500 V2.500 M4 4.500 V8.300 M6 4.500 V8.300"/></svg>
  <div class="abs" style="left:655px;top:25.500px;font-size:12px;line-height:16px;color:#606266;white-space:nowrap">清空</div>
  <!-- round tools -->
  <div class="rb" style="left:1485px"></div>
  <svg class="abs" style="left:1495px;top:85.700px" width="12" height="12" viewBox="0 0 12 12" fill="none" stroke="#606266" stroke-width="1"><path d="M10.500 5 A4.600 4.600 0 0 0 2.300 3.200"/><path d="M1.500 7 A4.600 4.600 0 0 0 9.700 8.800"/><path d="M2.200 1 V3.400 H4.600" /><path d="M9.800 11 V8.600 H7.400"/></svg>
  <div class="rb" style="left:1525px"></div>
  <svg class="abs" style="left:1536px;top:86.700px" width="10" height="10" viewBox="0 0 10 10" fill="#555"><rect x="0" y="0" width="4.200" height="4.200"/><rect x="5.800" y="0" width="4.200" height="4.200"/><rect x="0" y="5.800" width="4.200" height="4.200"/><rect x="5.800" y="5.800" width="4.200" height="4.200"/></svg>
  <div class="rb" style="left:1565px"></div>
  <svg class="abs" style="left:1575px;top:85.700px" width="12" height="12" viewBox="0 0 12 12"><circle cx="5.600" cy="5.600" r="4.600" fill="none" stroke="#606266" stroke-width="1"/><path d="M8.900 8.900 L11 11" stroke="#606266" stroke-width="1"/></svg>

  <!-- table -->
  <div class="abs" style="left:24px;top:121px;width:1581px;height:607px;border:1px solid #e9ebee;border-bottom:1px solid #e9ebee;overflow:hidden">
    <div class="abs" style="left:0;top:0;width:1580px;height:44px;background:#fafafa;border-bottom:1px solid #e9ebee">
      <div class="hd" style="left:0px;width:50px"></div>
      <div class="hd" style="left:50px;width:50px;padding-left:0;text-align:center">#</div>
      <div class="hd" style="left:100px;width:234px">科研平台名称</div>
      <div class="hd" style="left:334px;width:229px">考核标题</div>
      <div class="hd" style="left:563px;width:229px">考核开始时间</div>
      <div class="hd" style="left:792px;width:229px">考核结束时间</div>
      <div class="hd" style="left:1021px;width:229px">审批状态</div>
      <div class="hd" style="left:1250px;width:230px">评估期报告</div>
      <div class="ck" style="top:15px"></div>
    </div>
    <div class="abs" style="left:0;top:44px;width:1573px;height:562px">
      <div class="rw" style="top:0px">
        <div style="left:0px;width:50px"><span class="ck" style="top:23px"></span></div>
        <div class="c" style="left:50px;width:50px;justify-content:center">1</div>
        <div class="c" style="left:100px;width:232px">中国交建岩土工程重点实验室</div>
        <div class="c" style="left:332px;width:228px">关于组织开展中交集团重点实验室评估工作的通知</div>
        <div class="c" style="left:560px;width:228px;padding-top:0;letter-spacing:.6px">2016-01-01</div>
        <div class="c" style="left:788px;width:228px;padding-top:0;letter-spacing:.6px">2019-12-31</div>
        <div style="left:1016px;width:228px"><span class="tag tg">已完成审核</span></div>
        <div style="left:1244px;width:228px"><span class="vb">查 看</span></div>
      </div>
      <div class="rw" style="top:61px">
        <div style="left:0px;width:50px"><span class="ck" style="top:23px"></span></div>
        <div class="c" style="left:50px;width:50px;justify-content:center">2</div>
        <div class="c" style="left:100px;width:232px">中国交建海岸工程水动力重点实验室</div>
        <div class="c" style="left:332px;width:228px">关于组织开展中交集团重点实验室评估工作的通知</div>
        <div class="c" style="left:560px;width:228px;padding-top:0;letter-spacing:.6px">2016-01-01</div>
        <div class="c" style="left:788px;width:228px;padding-top:0;letter-spacing:.6px">2019-12-31</div>
        <div style="left:1016px;width:228px"><span class="tag tg">已完成审核</span></div>
        <div style="left:1244px;width:228px"><span class="vb">查 看</span></div>
      </div>
      <div class="rw" style="top:122px">
        <div style="left:0px;width:50px"><span class="ck" style="top:23px"></span></div>
        <div class="c" style="left:50px;width:50px;justify-content:center">3</div>
        <div class="c" style="left:100px;width:232px">中国交建桥隧施工技术重点实验室</div>
        <div class="c" style="left:332px;width:228px">关于组织开展中交集团重点实验室评估工作的通知</div>
        <div class="c" style="left:560px;width:228px;padding-top:0;letter-spacing:.6px">2016-01-01</div>
        <div class="c" style="left:788px;width:228px;padding-top:0;letter-spacing:.6px">2019-12-31</div>
        <div style="left:1016px;width:228px"><span class="tag tg">已完成审核</span></div>
        <div style="left:1244px;width:228px"><span class="vb">查 看</span></div>
      </div>
      <div class="rw" style="top:183px">
        <div style="left:0px;width:50px"><span class="ck" style="top:23px"></span></div>
        <div class="c" style="left:50px;width:50px;justify-content:center">4</div>
        <div class="c" style="left:100px;width:232px">中国交建工程结构重点实验室</div>
        <div class="c" style="left:332px;width:228px">关于组织开展中交集团重点实验室评估工作的通知</div>
        <div class="c" style="left:560px;width:228px;padding-top:0;letter-spacing:.6px">2016-01-01</div>
        <div class="c" style="left:788px;width:228px;padding-top:0;letter-spacing:.6px">2019-12-31</div>
        <div style="left:1016px;width:228px"><span class="tag tg">已完成审核</span></div>
        <div style="left:1244px;width:228px"><span class="vb">查 看</span></div>
      </div>
      <div class="rw" style="top:244px">
        <div style="left:0px;width:50px"><span class="ck" style="top:23px"></span></div>
        <div class="c" style="left:50px;width:50px;justify-content:center">5</div>
        <div class="c" style="left:100px;width:232px">中国交建建筑材料重点实验室</div>
        <div class="c" style="left:332px;width:228px">关于组织开展中交集团重点实验室评估工作的通知</div>
        <div class="c" style="left:560px;width:228px;padding-top:0;letter-spacing:.6px">2016-01-01</div>
        <div class="c" style="left:788px;width:228px;padding-top:0;letter-spacing:.6px">2019-12-31</div>
        <div style="left:1016px;width:228px"><span class="tag tg">已完成审核</span></div>
        <div style="left:1244px;width:228px"><span class="vb">查 看</span></div>
      </div>
      <div class="rw" style="top:305px">
        <div style="left:0px;width:50px"><span class="ck" style="top:23px"></span></div>
        <div class="c" style="left:50px;width:50px;justify-content:center">6</div>
        <div class="c" style="left:100px;width:232px">中交交通基础工程环保与安全重点实验室</div>
        <div class="c" style="left:332px;width:228px">关于组织开展中交集团重点实验室评估工作的通知</div>
        <div class="c" style="left:560px;width:228px;padding-top:0;letter-spacing:.6px">2016-01-01</div>
        <div class="c" style="left:788px;width:228px;padding-top:0;letter-spacing:.6px">2019-12-31</div>
        <div style="left:1016px;width:228px"><span class="tag tg">已完成审核</span></div>
        <div style="left:1244px;width:228px"><span class="vb">查 看</span></div>
      </div>
      <div class="rw" style="top:366px">
        <div style="left:0px;width:50px"><span class="ck" style="top:23px"></span></div>
        <div class="c" style="left:50px;width:50px;justify-content:center">7</div>
        <div class="c" style="left:100px;width:232px">中国交建疏浚技术重点实验室</div>
        <div class="c" style="left:332px;width:228px">关于组织开展中交集团重点实验室评估工作的通知</div>
        <div class="c" style="left:560px;width:228px;padding-top:0;letter-spacing:.6px">2016-01-01</div>
        <div class="c" style="left:788px;width:228px;padding-top:0;letter-spacing:.6px">2019-12-31</div>
        <div style="left:1016px;width:228px"><span class="tag tg">已完成审核</span></div>
        <div style="left:1244px;width:228px"><span class="vb">查 看</span></div>
      </div>
      <div class="rw" style="top:427px">
        <div style="left:0px;width:50px"><span class="ck" style="top:23px"></span></div>
        <div class="c" style="left:50px;width:50px;justify-content:center">8</div>
        <div class="c" style="left:100px;width:232px">中国交建寒区旱区道路工程重点实验室</div>
        <div class="c" style="left:332px;width:228px">关于组织开展中交集团重点实验室评估工作的通知</div>
        <div class="c" style="left:560px;width:228px;padding-top:0;letter-spacing:.6px">2016-01-01</div>
        <div class="c" style="left:788px;width:228px;padding-top:0;letter-spacing:.6px">2019-12-31</div>
        <div style="left:1016px;width:228px"><span class="tag tg">已完成审核</span></div>
        <div style="left:1244px;width:228px"><span class="vb">查 看</span></div>
      </div>
      <div class="rw" style="top:488px;background:#f5f7fa">
        <div style="left:0px;width:50px"><span class="ck" style="top:23px"></span></div>
        <div class="c" style="left:50px;width:50px;justify-content:center">9</div>
        <div class="c" style="left:100px;width:232px">中国交建综合交通虚拟仿真应用技术研发中心（港口和城市）</div>
        <div class="c" style="left:332px;width:228px">关于组织开展中交集团研发中心评估工作通知</div>
        <div class="c" style="left:560px;width:228px;padding-top:0;letter-spacing:.6px">2014-01-01</div>
        <div class="c" style="left:788px;width:228px;padding-top:0;letter-spacing:.6px">2019-12-31</div>
        <div style="left:1016px;width:228px"><span class="tag tr">未完成审核</span></div>
        <div style="left:1244px;width:228px"><span class="vb">查 看</span></div>
      </div>
      <div class="rw" style="top:549px;border-bottom:none">
        <div style="left:0px;width:50px"></div>
        <div style="left:50px;width:50px"></div>
        <div style="left:100px;width:232px"></div>
        <div style="left:332px;width:228px"></div>
        <div style="left:560px;width:228px"></div>
        <div style="left:788px;width:228px"></div>
        <div style="left:1016px;width:228px"></div>
        <div style="left:1244px;width:228px"></div>
      </div>
    </div>
    <div class="abs" style="left:1472px;top:0;width:108px;height:44px;background:#fafafa;border-bottom:1px solid #e9ebee;font-weight:bold;color:#1f1f1f;line-height:45px;text-align:center;padding-right:7px">操作</div>
    <div class="abs" style="left:1471px;top:44px;width:102px;height:562px;box-shadow:-1px 0 2px rgba(0,0,0,.03);background:#fff;border-left:2px solid #e7e9ec">
      <div class="abs" style="left:0;top:0px;width:100px;height:61px;border-bottom:1px solid #e9ebee"><svg class="abs" style="left:33px;top:24px" width="12" height="13" viewBox="0 0 12 13" fill="none" stroke="#4a8bea" stroke-width="1"><path d="M7 1.200 L9.300 2.600 L4.200 11 L1.800 11.800 L1.900 9.600 Z"/><path d="M6 2.800 L8.300 4.200"/><path d="M5.800 12 H11.500"/></svg><span class="ed">编 辑</span></div>
      <div class="abs" style="left:0;top:61px;width:100px;height:61px;border-bottom:1px solid #e9ebee"><svg class="abs" style="left:33px;top:24px" width="12" height="13" viewBox="0 0 12 13" fill="none" stroke="#4a8bea" stroke-width="1"><path d="M7 1.200 L9.300 2.600 L4.200 11 L1.800 11.800 L1.900 9.600 Z"/><path d="M6 2.800 L8.300 4.200"/><path d="M5.800 12 H11.500"/></svg><span class="ed">编 辑</span></div>
      <div class="abs" style="left:0;top:122px;width:100px;height:61px;border-bottom:1px solid #e9ebee"><svg class="abs" style="left:33px;top:24px" width="12" height="13" viewBox="0 0 12 13" fill="none" stroke="#4a8bea" stroke-width="1"><path d="M7 1.200 L9.300 2.600 L4.200 11 L1.800 11.800 L1.900 9.600 Z"/><path d="M6 2.800 L8.300 4.200"/><path d="M5.800 12 H11.500"/></svg><span class="ed">编 辑</span></div>
      <div class="abs" style="left:0;top:183px;width:100px;height:61px;border-bottom:1px solid #e9ebee"><svg class="abs" style="left:33px;top:24px" width="12" height="13" viewBox="0 0 12 13" fill="none" stroke="#4a8bea" stroke-width="1"><path d="M7 1.200 L9.300 2.600 L4.200 11 L1.800 11.800 L1.900 9.600 Z"/><path d="M6 2.800 L8.300 4.200"/><path d="M5.800 12 H11.500"/></svg><span class="ed">编 辑</span></div>
      <div class="abs" style="left:0;top:244px;width:100px;height:61px;border-bottom:1px solid #e9ebee"><svg class="abs" style="left:33px;top:24px" width="12" height="13" viewBox="0 0 12 13" fill="none" stroke="#4a8bea" stroke-width="1"><path d="M7 1.200 L9.300 2.600 L4.200 11 L1.800 11.800 L1.900 9.600 Z"/><path d="M6 2.800 L8.300 4.200"/><path d="M5.800 12 H11.500"/></svg><span class="ed">编 辑</span></div>
      <div class="abs" style="left:0;top:305px;width:100px;height:61px;border-bottom:1px solid #e9ebee"><svg class="abs" style="left:33px;top:24px" width="12" height="13" viewBox="0 0 12 13" fill="none" stroke="#4a8bea" stroke-width="1"><path d="M7 1.200 L9.300 2.600 L4.200 11 L1.800 11.800 L1.900 9.600 Z"/><path d="M6 2.800 L8.300 4.200"/><path d="M5.800 12 H11.500"/></svg><span class="ed">编 辑</span></div>
      <div class="abs" style="left:0;top:366px;width:100px;height:61px;border-bottom:1px solid #e9ebee"><svg class="abs" style="left:33px;top:24px" width="12" height="13" viewBox="0 0 12 13" fill="none" stroke="#4a8bea" stroke-width="1"><path d="M7 1.200 L9.300 2.600 L4.200 11 L1.800 11.800 L1.900 9.600 Z"/><path d="M6 2.800 L8.300 4.200"/><path d="M5.800 12 H11.500"/></svg><span class="ed">编 辑</span></div>
      <div class="abs" style="left:0;top:427px;width:100px;height:61px;border-bottom:1px solid #e9ebee"><svg class="abs" style="left:33px;top:24px" width="12" height="13" viewBox="0 0 12 13" fill="none" stroke="#4a8bea" stroke-width="1"><path d="M7 1.200 L9.300 2.600 L4.200 11 L1.800 11.800 L1.900 9.600 Z"/><path d="M6 2.800 L8.300 4.200"/><path d="M5.800 12 H11.500"/></svg><span class="ed">编 辑</span></div>
      <div class="abs" style="left:0;top:488px;width:100px;height:61px;border-bottom:1px solid #e9ebee;background:#f5f7fa"><svg class="abs" style="left:33px;top:24px" width="12" height="13" viewBox="0 0 12 13" fill="none" stroke="#4a8bea" stroke-width="1"><path d="M7 1.200 L9.300 2.600 L4.200 11 L1.800 11.800 L1.900 9.600 Z"/><path d="M6 2.800 L8.300 4.200"/><path d="M5.800 12 H11.500"/></svg><span class="ed">编 辑</span></div>
    </div>
    <div class="abs" style="left:1573px;top:0;width:7px;height:44px;background:#fafafa;border-bottom:1px solid #e9ebee;border-left:1px solid #e9ebee"></div>
    <div class="abs" style="left:1573px;top:44px;width:7px;height:562px;background:#fff"></div>
    <div class="abs" style="left:1573px;top:44px;width:7px;height:518px;background:#dddddf;border-radius:3px"></div>
  </div>
  <!-- pagination -->
  <div class="pg" style="left:1105px;color:#606266">共 21 条</div>
  <div class="pg" style="left:1168px;width:100px;border:1px solid #dcdfe6;border-radius:3px;background:#fff"></div>
  <div class="pg" style="left:1187px;color:#606266">10条/页</div>
  <svg class="abs" style="left:1250px;top:766px" width="10" height="6" viewBox="0 0 10 6"><path d="M.8 .8 L5 5 L9.200 .8" fill="none" stroke="#c0c4cc" stroke-width="1.100"/></svg>
  <div class="pg pb" style="left:1288px"></div>
  <svg class="abs" style="left:1300px;top:764px" width="6" height="10" viewBox="0 0 6 10"><path d="M5 .8 L1 5 L5 9.200" fill="none" stroke="#c0c4cc" stroke-width="1.300"/></svg>
  <div class="pg pb" style="left:1328px;background:#409eff;color:#fff">1</div>
  <div class="pg pb" style="left:1368px">2</div>
  <div class="pg pb" style="left:1408px">3</div>
  <div class="pg pb" style="left:1448px"></div>
  <svg class="abs" style="left:1460px;top:764px" width="6" height="10" viewBox="0 0 6 10"><path d="M1 .8 L5 5 L1 9.200" fill="none" stroke="#55595f" stroke-width="1.200"/></svg>
  <div class="pg" style="left:1506px;color:#606266">前往</div>
  <div class="pg" style="left:1537px;width:46px;border:1px solid #dcdfe6;border-radius:3px;background:#fff;text-align:center;color:#606266;line-height:26px">1</div>
  <div class="pg" style="left:1587px;color:#606266">页</div>
</div>
<!-- page scrollbar thumb -->
<div class="abs" style="left:1910px;top:745px;width:7px;height:58px;border-radius:3.500px;background:linear-gradient(180deg,#a3a3a7 0%,#9b9b9f 52%,#2fc65a 55%,#3fd468 80%,#66e384 100%);box-shadow:0 0 5px 3px rgba(255,255,255,.85)"></div>
</body>
</html>
